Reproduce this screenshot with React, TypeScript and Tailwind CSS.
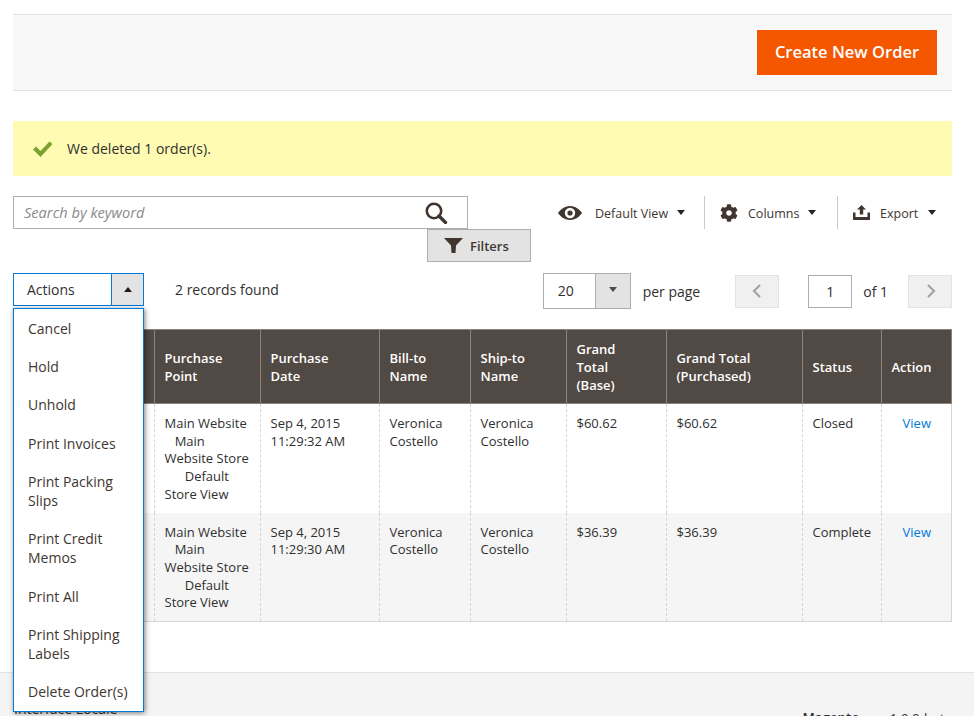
import React from "react";
import { FaCog } from "react-icons/fa";

const Caret = ({ up = false, cls = "" }: { up?: boolean; cls?: string }) => (
  <svg width="8" height="5" viewBox="0 0 10 5" preserveAspectRatio="none" className={cls}>
    <path d={up ? "M5 0L10 5H0z" : "M0 0h10L5 5z"} fill="currentColor" />
  </svg>
);

const Store = () => (
  <span className="whitespace-pre-wrap">{"Main Website\n   Main Website Store\n      Default Store View"}</span>
);

type Row = { date: string[]; total: string; status: string; alt?: boolean };
const rows: Row[] = [
  { date: ["Sep 4, 2015", "11:29:32 AM"], total: "$60.62", status: "Closed" },
  { date: ["Sep 4, 2015", "11:29:30 AM"], total: "$36.39", status: "Complete", alt: true },
];

const th = "border border-[#8a837e] pl-[9.5px] pr-[9px] text-left align-middle font-semibold text-white text-[13px] leading-[18px]";
const td = "border-l border-dashed border-[#d6d6d6] pl-[9.5px] pr-[9px] pt-[11px] pb-[9px] align-top text-[13px] leading-[17.68px]";

const menu = ["Cancel", "Hold", "Unhold", "Print Invoices", "Print Packing Slips", "Print Credit Memos", "Print All", "Print Shipping Labels", "Delete Order(s)"];

export default function App() {
  return (
    <div className="relative h-[716px] w-[974px] overflow-hidden bg-white text-[#303030] font-['Open_Sans',sans-serif]">
      <div className="pl-[13px] pr-[22px] pt-[14px]">
        <div className="flex h-[77px] items-start justify-end border-y border-[#e3e3e3] bg-[#f8f8f8] pr-[15px] pt-[15px]">
          <button className="h-[45px] w-[180px] bg-[#f55600] pb-[1px] text-[16.5px] font-semibold text-white">Create New Order</button>
        </div>

        <div className="mt-[30px] flex h-[55px] items-center bg-[#fffbb3] pl-[20px] text-[14px]">
          <svg width="20" height="16" viewBox="0 0 20 16" className="mr-[14px]">
            <path d="M0 8.5 L3 5.5 L7.5 10 L16.5 0.5 L19.5 3 L7.5 16z" fill="#79a22e" />
          </svg>
          We deleted 1 order(s).
        </div>

        <div className="mt-[20px] flex h-[33px] items-start">
          <div className="flex h-[33px] w-[455px] items-center justify-between border border-[#adadad] pl-[10px] pr-[19px]">
            <span className="text-[14.6px] italic text-[#8a8a8a]">Search by keyword</span>
            <svg width="23" height="22" viewBox="0 0 23 22" className="text-[#41362f]">
              <circle cx="9" cy="9" r="7.2" fill="none" stroke="currentColor" strokeWidth="2.6" />
              <path d="M14 14 L20.5 20.5" stroke="currentColor" strokeWidth="3.4" strokeLinecap="round" />
            </svg>
          </div>
          <div className="ml-[90px] flex h-[33px] items-center text-[12.5px] text-[#41362f]">
            <svg width="24" height="14" viewBox="0 0 24 14" className="mr-[13px]">
              <path fillRule="evenodd" d="M12 0C18 0 22 4 24 7C22 10 18 14 12 14C6 14 2 10 0 7C2 4 6 0 12 0ZM12 1.8A5.2 5.2 0 1 0 12 12.2A5.2 5.2 0 1 0 12 1.8ZM12 4.4A2.6 2.6 0 1 1 12 9.6A2.6 2.6 0 1 1 12 4.4Z" fill="currentColor" />
            </svg>
            <span className="w-[72px] pt-[3px] whitespace-nowrap">Default View</span>
            <Caret cls="ml-[10px] text-[#2b2320]" />
            <div className="ml-[19px] mr-[15px] h-[33px] w-px bg-[#cacaca]" />
            <FaCog className="mr-[10px] h-[18px] w-[18px]" />
            <span className="w-[52px] pt-[3px]">Columns</span>
            <Caret cls="ml-[8px] text-[#2b2320]" />
            <div className="ml-[21px] mr-[15px] h-[33px] w-px bg-[#cacaca]" />
            <svg width="17" height="15" viewBox="0 0 17 15" className="mr-[10px]">
              <path d="M8.500 0L13 4.500H10.200V9.500H6.800V4.500H4z M0 7.500H2.500V12H14.500V7.500H17V15H0z" fill="currentColor" />
            </svg>
            <span className="w-[38px] pt-[3px]">Export</span>
            <Caret cls="ml-[10px] text-[#2b2320]" />
          </div>
        </div>

        <div className="flex h-[33px]">
          <button className="ml-[414px] flex h-[33px] w-[104px] items-center justify-start gap-[7px] border border-[#adadad] bg-[#e3e3e3] pl-[16px] text-[13px] font-semibold text-[#41362f]">
            <svg width="19" height="15" viewBox="0 0 19 15"><path d="M0 0H19L12 7.500L11.500 15H7.500L7 7.500z" fill="currentColor" /></svg>
            <span className="pt-[2px]">Filters</span>
          </button>
        </div>

        <div className="mt-[11px] flex h-[33px] items-start text-[14px]">
          <div className="flex h-[33px] w-[131px] border border-[#007bdb]">
            <span className="flex-1 pl-[13px] leading-[31px]">Actions</span>
            <span className="flex w-[32px] items-center justify-center border-l border-[#007bdb] bg-[#e3e3e3] text-[#1f1a17]"><Caret up /></span>
          </div>
          <span className="ml-[31px] leading-[33px]">2 records found</span>
          <div className="ml-auto flex h-[36px] items-center">
            <div className="flex h-[36px] w-[88px] border border-[#adadad]">
              <span className="flex-1 pl-[14px] leading-[33px]">20</span>
              <span className="flex w-[35px] items-center justify-center border-l border-[#adadad] bg-[#e3e3e3] pb-[3px] text-[#514943]"><Caret /></span>
            </div>
            <span className="ml-[12px]">per page</span>
            <button className="ml-[35px] mt-[1px] flex h-[33px] w-[44px] items-center justify-center border border-[#e3e3e3] bg-[#f0f0f0] pb-[2px] text-[#a3a3a3]">
              <svg width="11" height="14" viewBox="0 0 11 14"><path d="M8 1L2 7L8 13" fill="none" stroke="currentColor" strokeWidth="2.200" /></svg>
            </button>
            <span className="ml-[29px] mt-[1px] flex h-[33px] w-[44px] items-center justify-center border border-[#adadad]">1</span>
            <span className="ml-[11px]">of 1</span>
            <button className="ml-[20px] mt-[1px] flex h-[33px] w-[44px] items-center justify-center border border-[#e3e3e3] bg-[#f0f0f0] pb-[2px] text-[#a3a3a3]">
              <svg width="11" height="14" viewBox="0 0 11 14"><path d="M3 1L9 7L3 13" fill="none" stroke="currentColor" strokeWidth="2.200" /></svg>
            </button>
          </div>
        </div>

        <table className="mt-[23px] w-[938px] table-fixed border-collapse border-b border-r border-[#d6d6d6]">
          <colgroup>
            <col className="w-[141px]" />
            <col className="w-[106px]" />
            <col className="w-[119px]" />
            <col className="w-[91px]" />
            <col className="w-[96px]" />
            <col className="w-[100px]" />
            <col className="w-[136px]" />
            <col className="w-[79px]" />
            <col className="w-[70px]" />
          </colgroup>
          <thead>
            <tr className="h-[74px] bg-[#514943]">
              <th className={th}></th>
              <th className={th}>Purchase<br />Point</th>
              <th className={th}>Purchase<br />Date</th>
              <th className={th}>Bill-to<br />Name</th>
              <th className={th}>Ship-to<br />Name</th>
              <th className={th}>Grand<br />Total<br />(Base)</th>
              <th className={th}>Grand Total<br />(Purchased)</th>
              <th className={th}>Status</th>
              <th className={th}>Action</th>
            </tr>
          </thead>
          <tbody>
            {rows.map((r) => (
              <tr key={r.date[1]} className={r.alt ? "h-[108px] bg-[#f5f5f5]" : "h-[109px] bg-white"}>
                <td className={td}></td>
                <td className={td}><Store /></td>
                <td className={td}>{r.date[0]}<br />{r.date[1]}</td>
                <td className={td}>Veronica Costello</td>
                <td className={td}>Veronica Costello</td>
                <td className={td}>{r.total}</td>
                <td className={td}>{r.total}</td>
                <td className={td}>{r.status}</td>
                <td className={td + " text-center"}><a className="text-[#007bdb]">View</a></td>
              </tr>
            ))}
          </tbody>
        </table>
      </div>

      <div className="absolute inset-x-0 top-[672px] h-[44px] border-t border-[#e3e3e3] bg-[#f4f4f4]">
        <span className="absolute left-[14px] top-[25px] text-[14px]">Interface Locale</span>
        <span className="absolute right-[22px] top-[35px] text-[13.400px]"><b className="font-semibold">Magento</b> ver. 1.0.0-beta</span>
      </div>

      <ul className="absolute left-[13px] top-[308px] w-[131px] border border-[#007bdb] bg-white text-[14px] leading-[19.04px] shadow-[1px_1px_5px_rgba(0,0,0,0.5)]">
        {menu.map((m) => (
          <li key={m} className="px-[14px] py-[9.65px] text-[#41362f]">{m}</li>
        ))}
      </ul>
    </div>
  );
}
